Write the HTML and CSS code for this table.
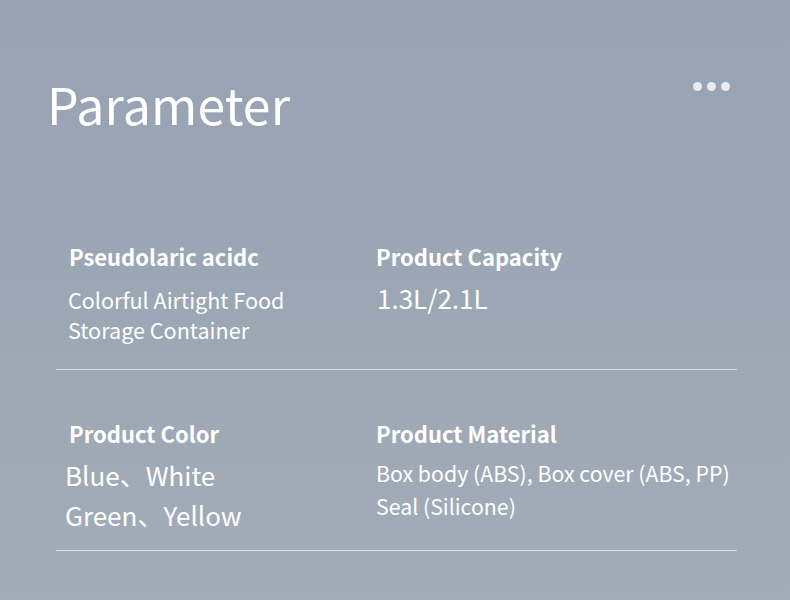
FILE: index.html
```html
<!DOCTYPE html>
<html>
<head>
<meta charset="utf-8">
<link rel="stylesheet" href="styles.css">
</head>
<body>
<div class="page">
  <header class="head">
    <h1 class="title">Parameter</h1>
    <div class="more"><span></span><span></span><span></span></div>
  </header>
  <section class="row row1">
    <div class="cell c1">
      <div class="label">Pseudolaric acidc</div>
      <div class="value v-name">Colorful Airtight Food<br>Storage Container</div>
    </div>
    <div class="cell c2">
      <div class="label">Product Capacity</div>
      <div class="value v-cap">1.3L/2.1L</div>
    </div>
  </section>
  <section class="row row2">
    <div class="cell c1">
      <div class="label">Product Color</div>
      <div class="value v-color">Blue、White<br>Green、Yellow</div>
    </div>
    <div class="cell c2">
      <div class="label">Product Material</div>
      <div class="value v-mat">Box body (ABS), Box cover (ABS, PP)<br>Seal (Silicone)</div>
    </div>
  </section>
</div>
</body>
</html>
```
FILE: styles.css
```css
html, body { margin: 0; padding: 0; }
body {
  width: 790px; height: 600px; overflow: hidden;
  background: linear-gradient(180deg, #97a3b3 0%, #9ca7b5 50%, #a3acb8 100%);
  font-family: "Noto Sans CJK SC", "Noto Sans", sans-serif;
  color: #ffffff;
}
.page { position: relative; width: 790px; height: 600px; }
.head { display: flex; justify-content: space-between; align-items: flex-start; padding: 71px 60px 0 47px; height: 152px; box-sizing: border-box; }
.title { margin: 0; font-weight: 400; font-size: 50px; line-height: 64px; letter-spacing: 0.1px; }
.more { display: flex; gap: 5px; margin-top: 11px; }
.more span { width: 9px; height: 9px; border-radius: 50%; background: #e9ebee; }
.row { display: grid; grid-template-columns: 320px 1fr; margin: 0 53px 0 56px; border-bottom: 1px solid #d9dbdc; }
.row1 { padding-top: 88px; height: 218px; box-sizing: border-box; }
.row2 { padding-top: 47px; height: 181px; box-sizing: border-box; }
.c1 { padding-left: 13px; }
.label { font-weight: 700; font-size: 22px; line-height: 32px; }
.value { font-weight: 400; }
.v-name { font-size: 21.6px; line-height: 30px; margin-top: 13px; margin-left: -1px; }
.v-cap { font-size: 26px; line-height: 32px; margin-top: 10px; margin-left: 1px; }
.v-color { font-size: 26px; line-height: 40px; margin-top: 6px; margin-left: -4px; }
.v-mat { font-size: 21.3px; line-height: 33px; margin-top: 7px; }
```
